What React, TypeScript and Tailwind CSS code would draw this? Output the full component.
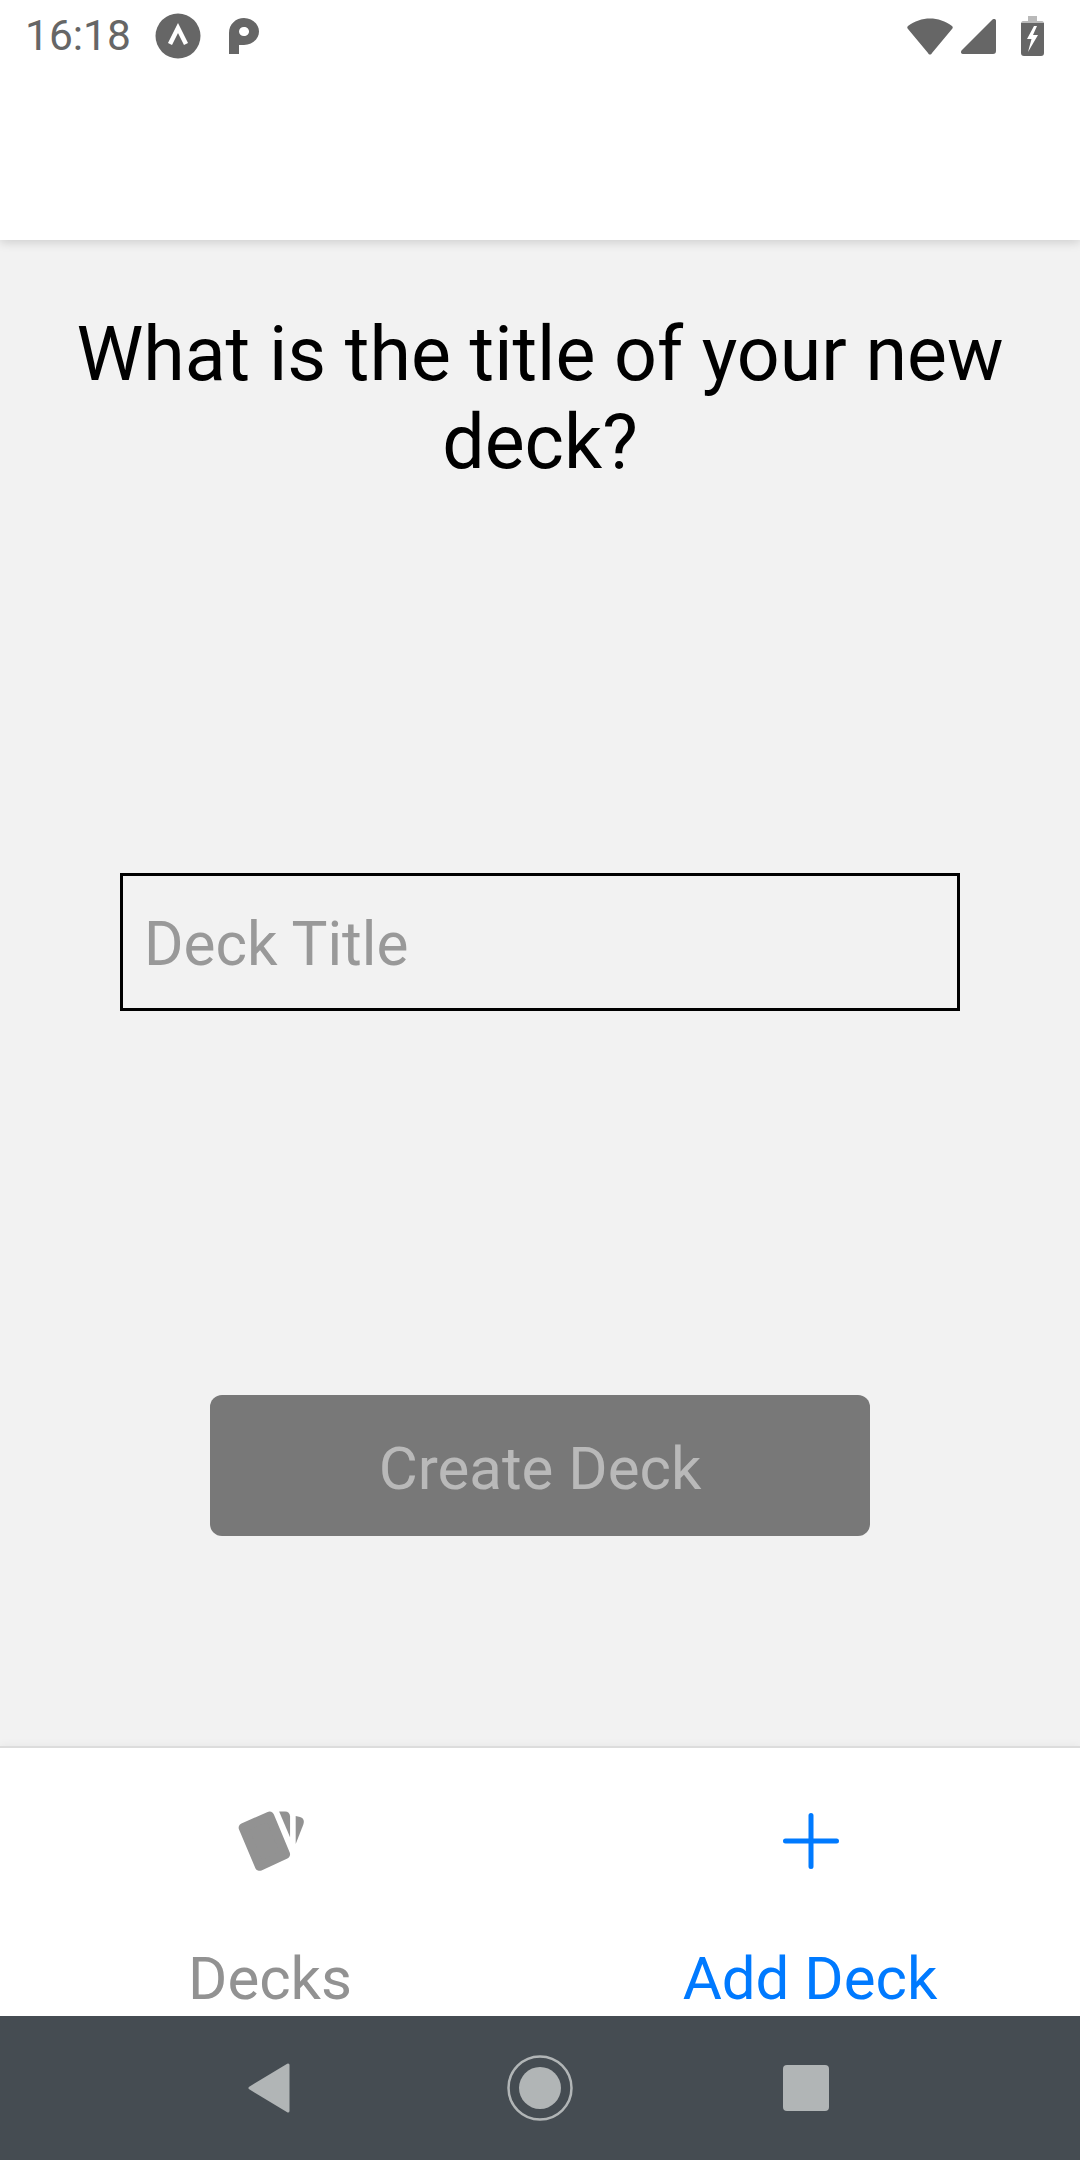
export default function App() {
  return (
    <div className="flex h-[2160px] w-[1080px] flex-col overflow-hidden bg-[#f2f2f2] font-['Roboto',sans-serif]">
      <header className="relative z-10 h-[240px] shrink-0 bg-white shadow-[0_2px_10px_rgba(0,0,0,0.16)]">
        <div className="flex h-[72px] items-center justify-between pl-[25px] pr-[36px]">
          <div className="flex items-center">
            <span className="text-[42.5px] leading-none text-[#666666]">16:18</span>
            <svg className="ml-[24px]" width="46" height="46" viewBox="0 0 46 46">
              <circle cx="23" cy="23" r="22.5" fill="#666666" />
              <path d="M15 31 L23 15 L31 31" fill="none" stroke="#ffffff" strokeWidth="4.5" />
            </svg>
            <svg className="ml-[27px]" width="32" height="38" viewBox="0 0 32 38">
              <path fillRule="evenodd" fill="#666666" d="M1 37 V16 C1 7 8 1 16 1 C24 1 31 7 31 14.5 C31 22 24 28 16 28 H11 V37 Z M16 10 C13 10 11 12 11 14.5 C11 17 13 19 16 19 C19 19 21 17 21 14.5 C21 12 19 10 16 10 Z" />
            </svg>
          </div>
          <div className="flex items-center">
            <svg width="46" height="38" viewBox="0 0 46 38">
              <path fill="#666666" d="M1 9 C14 -1 32 -1 45 9 C46 10 46 11 45 12 L25 36 C24 38 22 38 21 36 L1 12 C0 11 0 10 1 9 Z" />
            </svg>
            <svg className="ml-[8px]" width="35" height="35" viewBox="0 0 35 35">
              <path fill="#666666" d="M31 1 C33 -1 35 0 35 2 V32 C35 34 34 35 32 35 H3 C0 35 -1 33 1 31 Z" />
            </svg>
            <svg className="ml-[25px]" width="23" height="40" viewBox="0 0 23 40">
              <path fill="#b9b9b9" d="M7 0 H16 V5 H21 C22 5 23 6 23 7 H0 C0 6 1 5 2 5 H7 Z" />
              <path fill="#666666" fillRule="evenodd" d="M0 7 H23 V37 C23 39 22 40 20 40 H3 C1 40 0 39 0 37 Z M13 10 L6 23 H10.5 L7 36 L17 19 H12 L16 10 Z" />
            </svg>
          </div>
        </div>
      </header>

      <main className="flex min-h-0 flex-1 flex-col items-center">
        <h1 className="mt-[70px] w-[960px] text-center text-[75.3px] font-normal leading-[88px] text-black">
          What is the title of your new deck?
        </h1>
        <div className="mt-[387px] flex h-[138px] w-[840px] items-center border-[3px] border-black pb-0 pl-[21px] pt-[7px] text-[60.3px] text-[#999999]">
          Deck Title
        </div>
        <button className="mt-[384px] flex h-[141px] w-[660px] items-center justify-center rounded-[12px] bg-[#787878] pt-[6px] text-[60px] text-[#b9b9b9]">
          Create Deck
        </button>
      </main>

      <nav className="flex h-[270px] shrink-0 border-t-[2px] border-[#dcdcdc] bg-white shadow-[0_-2px_8px_rgba(0,0,0,0.04)]">
        <div className="flex flex-1 flex-col items-center">
          <svg className="ml-[1px] mt-[62px]" width="68" height="62" viewBox="260 240 205 186">
            <path d="M279 293 L358 258 L406 373 L328 409 Z" fill="#929292" stroke="#929292" strokeWidth="28" strokeLinejoin="round" />
            <path d="M387 244 H405 C414 244 419 250 420 258 V322 Z" fill="#929292" />
            <path d="M437 258 L450 261 C460 264 464 272 460 283 L437 342 Z" fill="#929292" />
          </svg>
          <span className="mt-[72px] text-[60px] leading-[70px] text-[#929292]">Decks</span>
        </div>
        <div className="flex flex-1 flex-col items-center">
          <svg className="ml-[2px] mt-[63px]" width="60" height="60" viewBox="0 0 60 60">
            <path d="M30 4.5 V55.5 M4.5 30 H55.5" fill="none" stroke="#007aff" strokeWidth="5" strokeLinecap="round" />
          </svg>
          <span className="mt-[73px] text-[60px] leading-[70px] text-[#007aff]">Add Deck</span>
        </div>
      </nav>

      <div className="flex h-[144px] shrink-0 items-center bg-[#454c52] pl-[247px]">
        <svg width="44" height="50" viewBox="0 0 44 50">
          <path d="M41 2 V48 L3 25 Z" fill="#b1b5b6" stroke="#b1b5b6" strokeWidth="3" strokeLinejoin="round" />
        </svg>
        <svg className="ml-[216px]" width="66" height="66" viewBox="0 0 66 66">
          <circle cx="33" cy="33" r="31.5" fill="none" stroke="#b1b5b6" strokeWidth="2.5" />
          <circle cx="33" cy="33" r="21" fill="#b1b5b6" />
        </svg>
        <div className="ml-[210px] h-[46px] w-[46px] rounded-[4px] bg-[#b1b5b6]" />
      </div>
    </div>
  );
}
